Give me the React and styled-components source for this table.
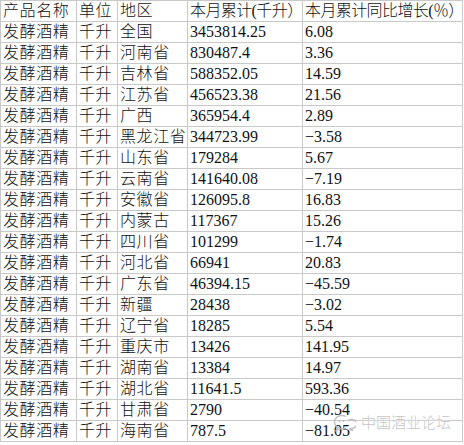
import React from "react";
import styled, { createGlobalStyle } from "styled-components";

const Global = createGlobalStyle`
  html, body { margin: 0; padding: 0; background: #ffffff; }
  body { width: 464px; height: 445px; overflow: hidden; }
`;

const Page = styled.div`
  position: relative;
  width: 464px;
  height: 445px;
  background: #fff;
`;

const Table = styled.table`
  border-collapse: collapse;
  table-layout: fixed;
  width: 462px;
  font-family: "Liberation Serif", "Noto Sans CJK SC", serif;
  font-size: 16px;
  font-weight: 300;
  color: #111;
`;

const Cell = styled.td`
  border: 1px solid #c9c9c9;
  height: 20px;
  padding: 0 0 0 2px;
  line-height: 20px;
  white-space: nowrap;
  overflow: hidden;
  vertical-align: middle;
  letter-spacing: ${(p) => (p.$wide ? "0.6px" : "0")};
`;

const HeadCell = styled(Cell).attrs({ as: "th" })`
  font-weight: 300;
  text-align: left;
  letter-spacing: ${(p) => (p.$tight ? "-0.6px" : "0.6px")};
`;

const Watermark = styled.div`
  position: absolute;
  left: 332px;
  top: 411px;
  display: flex;
  align-items: center;
  gap: 5px;
  font-family: "Noto Sans CJK SC", sans-serif;
  font-size: 15px;
  font-weight: 300;
  color: rgba(190, 190, 190, 0.9);
  text-shadow: 0 0 2px #fff, 0 0 1px #fff;
  pointer-events: none;
`;

const rows = [
  ["全国", "3453814.25", "6.08"],
  ["河南省", "830487.4", "3.36"],
  ["吉林省", "588352.05", "14.59"],
  ["江苏省", "456523.38", "21.56"],
  ["广西", "365954.4", "2.89"],
  ["黑龙江省", "344723.99", "−3.58"],
  ["山东省", "179284", "5.67"],
  ["云南省", "141640.08", "−7.19"],
  ["安徽省", "126095.8", "16.83"],
  ["内蒙古", "117367", "15.26"],
  ["四川省", "101299", "−1.74"],
  ["河北省", "66941", "20.83"],
  ["广东省", "46394.15", "−45.59"],
  ["新疆", "28438", "−3.02"],
  ["辽宁省", "18285", "5.54"],
  ["重庆市", "13426", "141.95"],
  ["湖南省", "13384", "14.97"],
  ["湖北省", "11641.5", "593.36"],
  ["甘肃省", "2790", "−40.54"],
  ["海南省", "787.5", "−81.05"],
];

const WeChatMark = () => (
  <svg width="24" height="20" viewBox="0 0 24 20" fill="none" stroke="rgba(185,185,185,0.9)" strokeWidth="1.4">
    <path d="M14 4.5 A7 6 0 1 0 6 15.5 L4 18.5 L8.5 16.5 A7 6 0 0 0 14 16" />
    <circle cx="7.5" cy="9" r="0.9" fill="rgba(185,185,185,0.9)" stroke="none" />
    <circle cx="11.5" cy="9" r="0.9" fill="rgba(185,185,185,0.9)" stroke="none" />
    <path d="M16 8.5 A5.5 4.5 0 1 1 19 16.5 L21 18.5 L17 17.2" />
  </svg>
);

export default function App() {
  return (
    <Page>
      <Global />
      <Table>
        <colgroup>
          <col style={{ width: 76 }} />
          <col style={{ width: 41 }} />
          <col style={{ width: 70 }} />
          <col style={{ width: 115 }} />
          <col style={{ width: 160 }} />
        </colgroup>
        <thead>
          <tr>
            <HeadCell>产品名称</HeadCell>
            <HeadCell>单位</HeadCell>
            <HeadCell>地区</HeadCell>
            <HeadCell $tight>本月累计(千升）</HeadCell>
            <HeadCell $tight>本月累计同比增长(％）</HeadCell>
          </tr>
        </thead>
        <tbody>
          {rows.map(([region, total, growth]) => (
            <tr key={region}>
              <Cell $wide>发酵酒精</Cell>
              <Cell $wide>千升</Cell>
              <Cell $wide>{region}</Cell>
              <Cell>{total}</Cell>
              <Cell>{growth}</Cell>
            </tr>
          ))}
        </tbody>
      </Table>
      <Watermark>
        <WeChatMark />
        <span>中国酒业论坛</span>
      </Watermark>
    </Page>
  );
}
